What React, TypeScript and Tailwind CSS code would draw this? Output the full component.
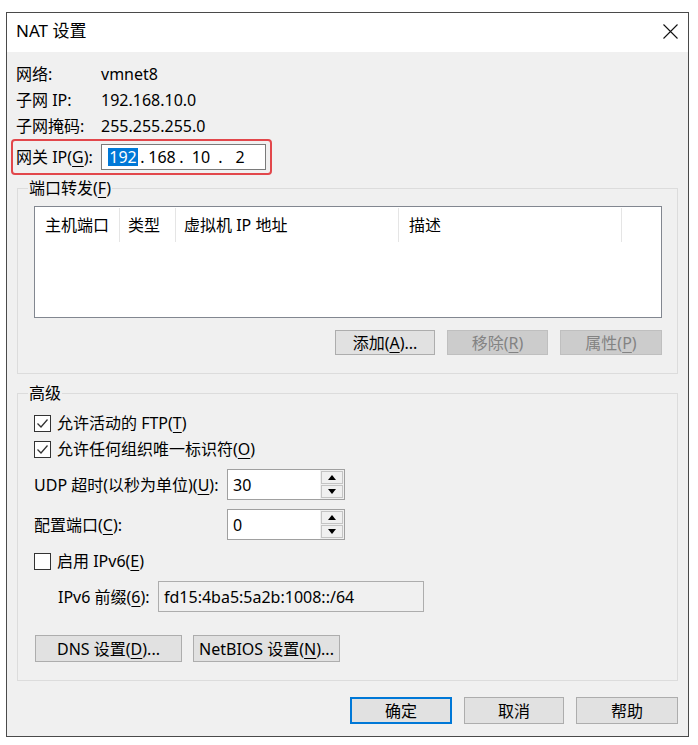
import type { ReactNode } from "react";

const font = "font-['Noto_Sans','Noto_Sans_CJK_SC',sans-serif]";

// mnemonic letter, underlined like a Win32 accelerator
function U({ children }: { children: ReactNode }) {
  return <span className="underline decoration-1 underline-offset-[3px]">{children}</span>;
}

function Button({
  children,
  className = "",
  disabled = false,
  primary = false,
}: {
  children: ReactNode;
  className?: string;
  disabled?: boolean;
  primary?: boolean;
}) {
  let look = "border border-[#adadad] bg-[#e1e1e1] text-black";
  if (disabled) look = "border border-[#bfbfbf] bg-[#cccccc] text-[#838383]";
  if (primary) look = "border-2 border-[#0078d7] bg-[#e1e1e1] text-black";
  return (
    <div className={`flex items-center justify-center text-[16px] leading-none ${look} ${className}`}>
      {children}
    </div>
  );
}

function Check({ checked }: { checked: boolean }) {
  return (
    <span className="flex h-[17px] w-[17px] shrink-0 items-center justify-center border border-[#333333] bg-white">
      {checked && (
        <svg width="15" height="15" viewBox="0 0 15 15">
          <path d="M2.5 7.5 L6 11 L12.5 3.5" fill="none" stroke="#333333" strokeWidth="1.3" />
        </svg>
      )}
    </span>
  );
}

function Spin({ value }: { value: string }) {
  return (
    <div className="flex h-[31px] w-[118px] border border-[#a0a0a0] bg-white">
      <div className="flex flex-1 items-center pl-[5px] text-[16px]">{value}</div>
      <div className="flex w-[24px] flex-col gap-[1px] bg-[#f0f0f0] p-[1px]">
        <div className="flex flex-1 items-center justify-center border border-[#c4c4c4] bg-[#f0f0f0]">
          <svg width="8" height="5" viewBox="0 0 8 5">
            <path d="M0 5 L4 0 L8 5 Z" fill="#000" />
          </svg>
        </div>
        <div className="flex flex-1 items-center justify-center border border-[#c4c4c4] bg-[#f0f0f0]">
          <svg width="8" height="5" viewBox="0 0 8 5">
            <path d="M0 0 L8 0 L4 5 Z" fill="#000" />
          </svg>
        </div>
      </div>
    </div>
  );
}

const info = [
  { label: "网络:", value: "vmnet8" },
  { label: "子网 IP:", value: "192.168.10.0" },
  { label: "子网掩码:", value: "255.255.255.0" },
];

const columns = [
  { title: "主机端口", w: "w-[85px] pl-[10px]" },
  { title: "类型", w: "w-[56px] pl-[8px]" },
  { title: "虚拟机 IP 地址", w: "w-[223px] pl-[8px]" },
  { title: "描述", w: "w-[223px] pl-[10px]" },
];

export default function App() {
  return (
    <div className={`h-[745px] w-[698px] bg-white pl-[6px] pt-[12px] text-black ${font}`}>
      <div className="flex h-[725px] w-[683px] flex-col border border-[#4a4a4a] bg-[#f0f0f0]">
        {/* Title bar */}
        <div className="flex h-[39px] items-center justify-between bg-white pb-[3px] pl-[9px] pr-[10px]">
          <span className="text-[17px]">NAT 设置</span>
          <svg width="15" height="15" viewBox="0 0 15 15">
            <path d="M0.5 0.5 L14.5 14.5 M14.5 0.5 L0.5 14.5" stroke="#111" strokeWidth="1.1" />
          </svg>
        </div>

        <div className="flex flex-1 flex-col pt-[9px] text-[16px]">
          {info.map((r) => (
            <div key={r.label} className="flex h-[26px] items-center pl-[9px]">
              <span className="w-[85px]">{r.label}</span>
              <span>{r.value}</span>
            </div>
          ))}

          {/* Gateway row, marked with a red frame */}
          <div className="ml-[4px] flex h-[36px] w-[261px] items-center rounded-[4px] border-2 border-[#e2474b] pl-[3px]">
            <span className="w-[85px]">
              网关 IP(<U>G</U>):
            </span>
            <div className="flex h-[26px] w-[165px] items-center border border-[#7a7a7a] bg-white pl-[6px] leading-none">
              <span className="flex w-[30px] justify-center">
                <span className="bg-[#0078d7] px-[1px] py-[1px] text-white">192</span>
              </span>
              <span className="w-[9px] text-center">.</span>
              <span className="w-[30px] text-center">168</span>
              <span className="w-[9px] text-center">.</span>
              <span className="w-[30px] text-center">10</span>
              <span className="w-[9px] text-center">.</span>
              <span className="w-[30px] text-center">2</span>
            </div>
          </div>

          {/* Port forwarding */}
          <fieldset className="mx-[10px] mt-[3px] border border-[#dcdcdc]">
            <legend className="ml-[10px] px-[1px] text-[16px] leading-[20px]">
              端口转发(<U>F</U>)
            </legend>
            <div className="pb-[18px] pl-[16px] pr-[15px] pt-[8px]">
              <div className="h-[112px] border border-[#828790] bg-white">
                <div className="flex h-[36px] items-center">
                  {columns.map((c) => (
                    <div key={c.title} className={`flex h-[34px] items-center border-r border-[#e5e5e5] ${c.w}`}>
                      {c.title}
                    </div>
                  ))}
                </div>
              </div>
              <div className="mt-[12px] flex justify-end gap-[12px]">
                <Button className="h-[25px] w-[100px]">
                  添加(<U>A</U>)...
                </Button>
                <Button disabled className="h-[25px] w-[101px]">
                  移除(<U>R</U>)
                </Button>
                <Button disabled className="h-[25px] w-[102px]">
                  属性(<U>P</U>)
                </Button>
              </div>
            </div>
          </fieldset>

          {/* Advanced */}
          <fieldset className="mx-[10px] mt-[9px] border border-[#dcdcdc]">
            <legend className="ml-[10px] px-[1px] text-[16px] leading-[20px]">高级</legend>
            <div className="pb-[18px] pl-[16px] pr-[15px] pt-[7px]">
              <div className="flex h-[26px] items-center gap-[6px]">
                <Check checked />
                <span>
                  允许活动的 FTP(<U>T</U>)
                </span>
              </div>
              <div className="flex h-[26px] items-center gap-[6px]">
                <Check checked />
                <span>
                  允许任何组织唯一标识符(<U>O</U>)
                </span>
              </div>
              <div className="mt-[7px] flex items-center">
                <span className="w-[193px]">
                  UDP 超时(以秒为单位)(<U>U</U>):
                </span>
                <Spin value="30" />
              </div>
              <div className="mt-[9px] flex items-center">
                <span className="w-[193px]">
                  配置端口(<U>C</U>):
                </span>
                <Spin value="0" />
              </div>
              <div className="mt-[8px] flex h-[26px] items-center gap-[6px]">
                <Check checked={false} />
                <span>
                  启用 IPv6(<U>E</U>)
                </span>
              </div>
              <div className="mt-[7px] flex items-center pl-[24px]">
                <span className="w-[100px]">
                  IPv6 前缀(<U>6</U>):
                </span>
                <div className="flex h-[31px] w-[266px] items-center border border-[#adadad] bg-[#f0f0f0] pl-[5px]">
                  fd15:4ba5:5a2b:1008::/64
                </div>
              </div>
              <div className="mt-[23px] flex gap-[11px] pl-[1px]">
                <Button className="h-[27px] w-[147px]">
                  DNS 设置(<U>D</U>)...
                </Button>
                <Button className="h-[27px] w-[147px]">
                  NetBIOS 设置(<U>N</U>)...
                </Button>
              </div>
            </div>
          </fieldset>

          {/* Dialog buttons */}
          <div className="mr-[10px] mt-[16px] flex justify-end gap-[12px]">
            <Button primary className="h-[27px] w-[102px]">
              确定
            </Button>
            <Button className="h-[27px] w-[100px]">取消</Button>
            <Button className="h-[27px] w-[102px]">帮助</Button>
          </div>
        </div>
      </div>
    </div>
  );
}
